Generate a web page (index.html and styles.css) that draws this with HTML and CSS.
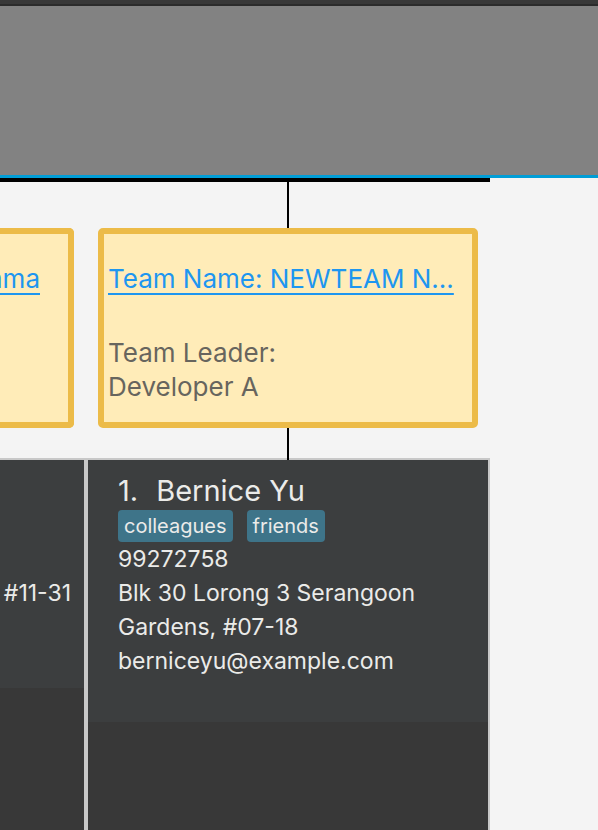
FILE: index.html
```
<!DOCTYPE html>
<html lang="en">
<head>
<meta charset="utf-8">
<title>Teams</title>
<link rel="stylesheet" href="styles.css">
</head>
<body>
<header class="banner"></header>
<main class="board">
  <section class="column column-clipped">
    <div class="stem stem-empty"></div>
    <div class="team">
      <a class="team-name" href="#">mma</a>
    </div>
    <div class="link-gap"></div>
    <div class="members">
      <article class="person person-short">
        <p class="detail">#11-31</p>
      </article>
    </div>
  </section>
  <section class="column">
    <div class="stem"></div>
    <div class="team">
      <a class="team-name" href="#">Team Name: NEWTEAM N...</a>
      <p class="leader">Team Leader:<br>Developer A</p>
    </div>
    <div class="link-gap"><div class="connector"></div></div>
    <div class="members">
      <article class="person">
        <h2 class="name"><span>1.</span><span>Bernice Yu</span></h2>
        <div class="tags"><span class="tag">colleagues</span><span class="tag">friends</span></div>
        <p class="detail">99272758</p>
        <p class="detail">Blk 30 Lorong 3 Serangoon<br>Gardens, #07-18</p>
        <p class="detail">berniceyu@example.com</p>
      </article>
    </div>
  </section>
</main>
</body>
</html>
```
FILE: styles.css
```
* {
  box-sizing: border-box;
}

body {
  margin: 0;
  min-height: 100vh;
  display: flex;
  flex-direction: column;
  background: #f4f4f4;
  font-family: Inter, "Liberation Sans", sans-serif;
}

h2,
p {
  margin: 0;
  font-weight: 400;
}

.banner {
  height: 178px;
  flex: none;
  background: linear-gradient(#383838 4px, #2b2b2b 4px 6px, #828282 6px);
  border-bottom: 3px solid #009dd6;
}

.board {
  flex: 1;
  display: grid;
  grid-template-columns: 86px 404px;
}

.column {
  display: flex;
  flex-direction: column;
  min-width: 0;
  overflow: hidden;
  border-top: 4px solid #000;
}

.stem {
  align-self: center;
  width: 2px;
  height: 46px;
  background: #000;
}

.stem-empty {
  background: none;
}

.team {
  height: 200px;
  margin: 0 12px;
  padding: 28px 4px;
  display: flex;
  flex-direction: column;
  align-items: flex-start;
  gap: 40px;
  background: #ffecb8;
  border: 6px solid #ecbb48;
  border-radius: 5px;
}

.team-name,
.leader {
  font-size: 26px;
  line-height: 34px;
  white-space: nowrap;
}

.team-name {
  color: #1e96f0;
  text-decoration: underline;
  text-decoration-thickness: 2px;
  text-underline-offset: 5px;
  text-decoration-skip-ink: none;
}

.leader {
  color: #67655e;
}

.link-gap {
  position: relative;
  height: 30px;
}

.connector {
  position: absolute;
  z-index: 1;
  top: 0;
  bottom: -2px;
  left: 50%;
  width: 2px;
  margin-left: -1px;
  background: #000;
}

.members {
  flex: 1;
  background: #383838;
  border: 2px solid #c8c8c8;
  border-bottom: 0;
}

.person {
  height: 262px;
  padding: 12px 30px;
  background: #3c3e3f;
  color: #ebebe9;
}

.name {
  display: flex;
  gap: 18px;
  font-size: 29px;
  line-height: 38px;
}

.tags {
  display: flex;
  gap: 14px;
}

.tag {
  padding: 2px 6px;
  border-radius: 4px;
  background: #3e7489;
  font-size: 20px;
  line-height: 28px;
}

.detail {
  font-size: 23px;
  line-height: 34px;
  white-space: nowrap;
}

/* The first column is scrolled off the left edge of the board. */
.column-clipped .team {
  margin-left: 0;
  padding-right: 28px;
  align-items: flex-end;
  border-left: 0;
  border-radius: 0 5px 5px 0;
}

.column-clipped .members {
  border-left: 0;
}

.person-short {
  height: 228px;
  padding: 116px 13px 0 0;
  display: flex;
  justify-content: flex-end;
}
```
